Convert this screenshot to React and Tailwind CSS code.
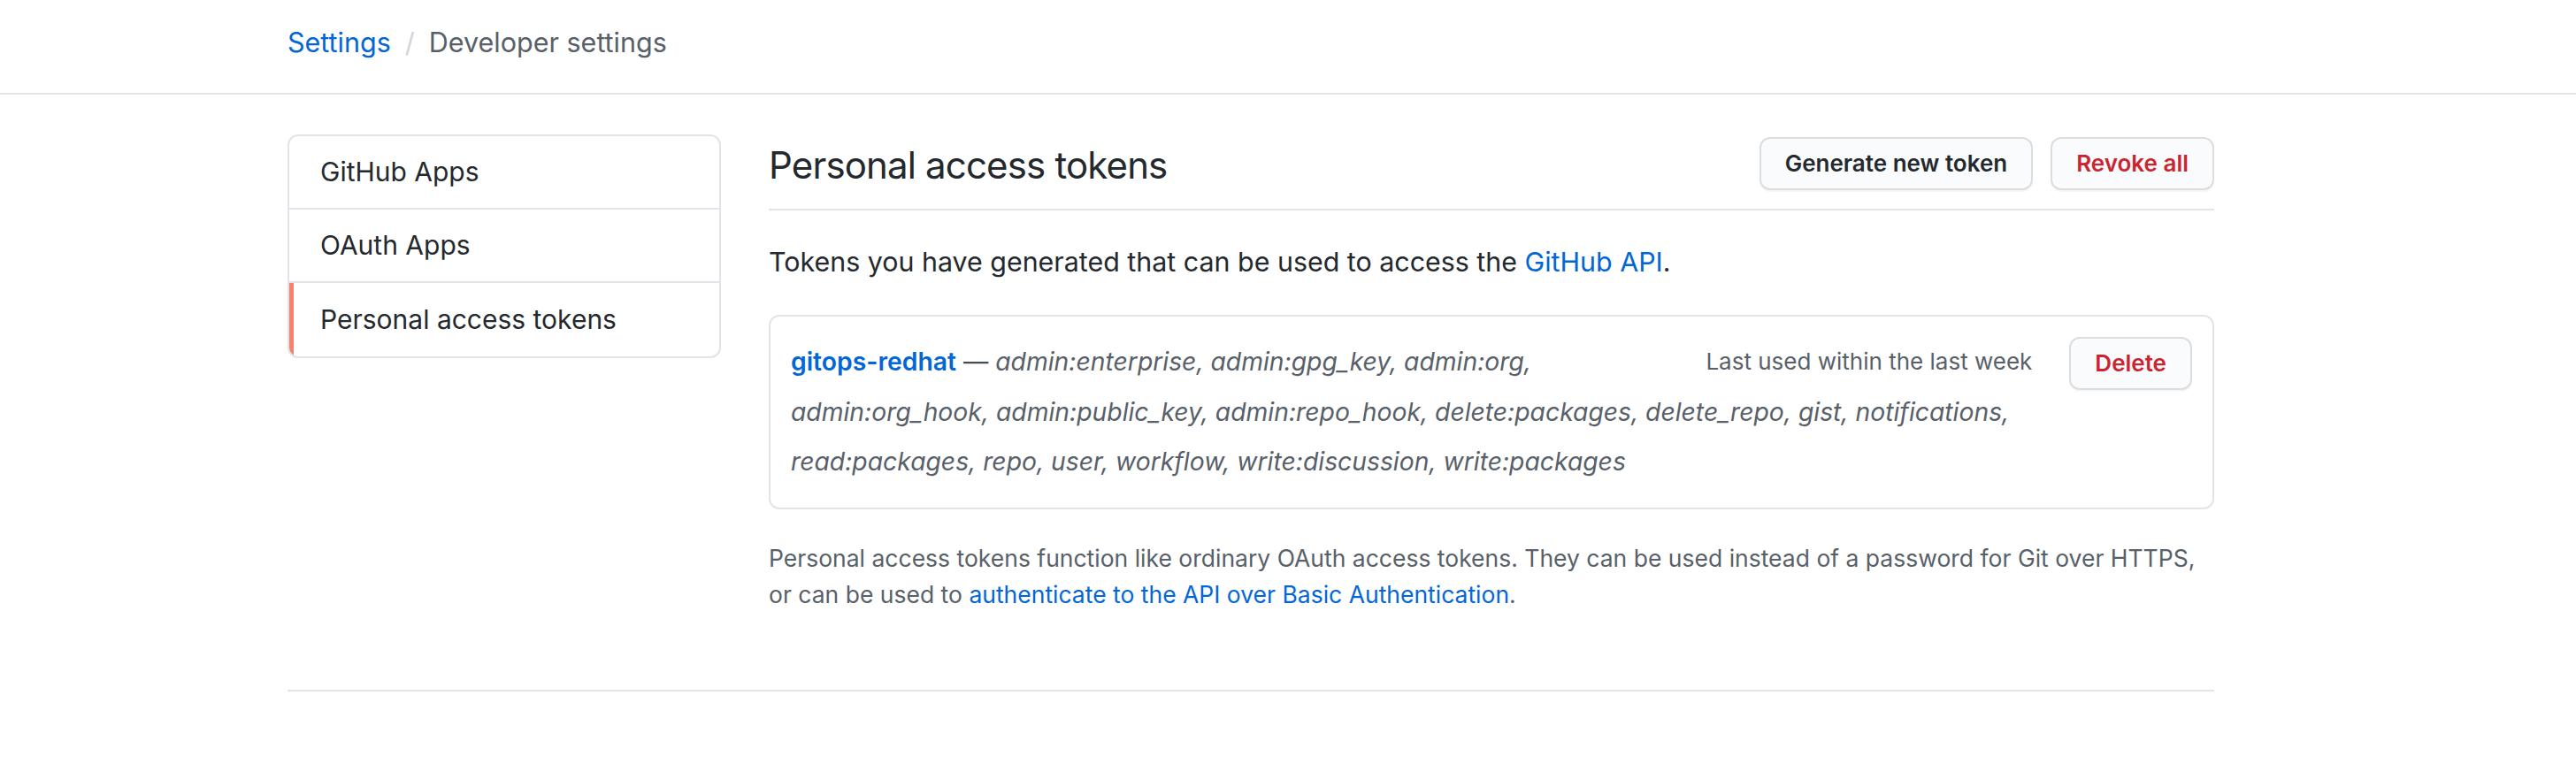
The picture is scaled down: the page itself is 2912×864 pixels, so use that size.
import React from "react";

function Btn({ children, danger, className = "" }) {
  return (
    <button
      type="button"
      className={
        "h-[60px] px-[27px] border-2 border-[#dcdddf] rounded-[12px] bg-[#fafbfc] text-[26px] font-semibold leading-none flex items-center shadow-[0_2px_0_rgba(27,31,35,0.04)] " +
        (danger ? "text-[#cb2431] " : "text-[#24292e] ") +
        className
      }
    >
      {children}
    </button>
  );
}

export default function App() {
  return (
    <div className="min-h-[864px] bg-white text-[#24292e] font-['Inter','Noto_Sans',sans-serif]">
      <header className="border-b-2 border-[#e1e4e8]">
        <div className="ml-[325px] w-[2178px] h-[105px] pb-[9px] flex items-center text-[30.5px]">
          <a className="text-[#0366d6]">Settings</a>
          <span className="mx-[16px] text-[#d1d5da]">/</span>
          <span className="text-[#586069]">Developer settings</span>
        </div>
      </header>

      <div className="ml-[325px] w-[2178px]">
        <div className="pt-[45px] flex gap-[54px]">
          <nav className="w-[490px] shrink-0 self-start border-2 border-[#e1e4e8] rounded-[12px] overflow-hidden text-[30px]">
            <div className="h-[83px] px-[35px] flex items-center border-b-2 border-[#e1e4e8]">
              GitHub Apps
            </div>
            <div className="h-[83px] px-[35px] flex items-center border-b-2 border-[#e1e4e8]">
              OAuth Apps
            </div>
            <div className="h-[83px] flex items-stretch">
              <div className="w-[5px] bg-[#f9826c]" />
              <div className="pl-[30px] flex items-center">Personal access tokens</div>
            </div>
          </nav>

          <main className="flex-1 min-w-0">
            <div className="pt-[3px] pb-[21px] flex items-center justify-between border-b-2 border-[#e1e4e8]">
              <h2 className="pt-[3px] text-[42px] leading-none font-normal tracking-[-0.02em]">
                Personal access tokens
              </h2>
              <div className="flex gap-[20px]">
                <Btn>Generate new token</Btn>
                <Btn danger>Revoke all</Btn>
              </div>
            </div>

            <p className="mt-[36px] mb-[37px] text-[30.4px] leading-[45px]">
              Tokens you have generated that can be used to access the{" "}
              <a className="text-[#0366d6]">GitHub API</a>.
            </p>

            <div className="border-2 border-[#e1e4e8] rounded-[12px] p-[23px] text-[28.3px] leading-[56.5px] flow-root">
              <Btn danger className="float-right">Delete</Btn>
              <span className="float-right mr-[42px] text-[26px] text-[#586069]">
                Last used within the last week
              </span>
              <strong className="font-semibold text-[#0366d6]">gitops-redhat</strong>
              <span className="text-[#444d56]"> — </span>
              <em className="text-[#586069]">
                admin:enterprise, admin:gpg_key, admin:org,
                <br />
                admin:org_hook, admin:public_key, admin:repo_hook, delete:packages, delete_repo, gist, notifications,
                <br />
                read:packages, repo, user, workflow, write:discussion, write:packages
              </em>
            </div>

            <p className="mt-[35px] text-[26.5px] leading-[41px] text-[#586069]">
              Personal access tokens function like ordinary OAuth access tokens. They can be used instead of a password for Git over HTTPS,
              <br />
              or can be used to{" "}
              <a className="text-[#0366d6]">authenticate to the API over Basic Authentication</a>.
            </p>
          </main>
        </div>

        <div className="mt-[87px] border-t-2 border-[#e1e4e8]" />
      </div>
    </div>
  );
}
